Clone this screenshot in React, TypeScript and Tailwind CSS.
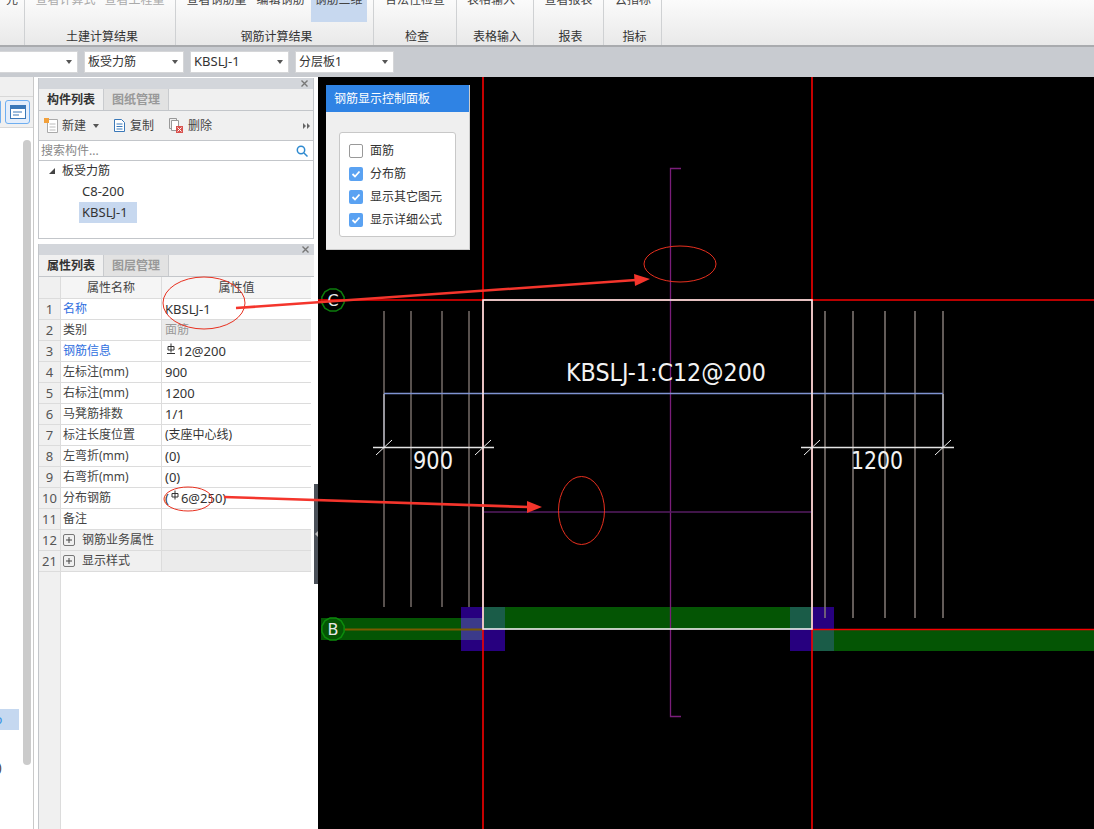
import React from "react";

const FONT = "font-['Noto_Sans','Noto_Sans_CJK_SC',sans-serif]";

function Rebar({ top }: { top?: boolean }) {
  return (
    <svg width="10" height="11" viewBox="0 0 10 11" className="mb-[5px] shrink-0" fill="none" stroke="#333" strokeWidth="1">
      {top ? <path d="M1 10.5h8" /> : null}
      <path d="M2 3.5h6v3.5h-6zM5 0.5v9" />
    </svg>
  );
}

function CloseX() {
  return (
    <svg width="7" height="7" viewBox="0 0 7 7" stroke="#777" strokeWidth="1.4">
      <path d="M0.5 0.5l6 6M6.5 0.5l-6 6" />
    </svg>
  );
}

function Caret() {
  return <span className="block w-0 h-0 border-x-[3px] border-t-[4px] border-x-transparent border-t-[#555]" />;
}

function TitleBar() {
  return (
    <div className="h-[11px] bg-[#d3d6db] flex items-center justify-end pr-[5px]">
      <CloseX />
    </div>
  );
}

function Tabs({ a, b }: { a: string; b: string }) {
  return (
    <div className="h-[22px] bg-[#f0f0f0] border-b border-[#c3c6ca] flex text-[12px] leading-[22px]">
      <div className="w-[65px] text-center font-bold text-[#333] border-r border-[#c9cbce]">{a}</div>
      <div className="w-[65px] text-center font-bold text-[#999] bg-[#e2e2e2] border-r border-[#c9cbce]">{b}</div>
    </div>
  );
}

function RibbonGroup({ w, top, label, gray, shift, children }: { w: string; top?: string[]; label?: string; gray?: boolean; shift?: string; children?: React.ReactNode }) {
  return (
    <div className={`${w} h-[45px] border-r border-[#cfd1d3] flex flex-col items-center shrink-0`}>
      <div className={`h-[22px] overflow-hidden flex items-start justify-center gap-[9px] text-[12px] ${shift ?? ""} ${gray ? "text-[#aaa]" : "text-[#444]"}`}>
        {children ?? top?.map((t) => <span key={t} className="-mt-[9px] leading-[18px]">{t}</span>)}
      </div>
      <div className="mt-[7px] pl-[4px] text-[12px] leading-[16px] text-[#333]">{label}</div>
    </div>
  );
}

function Select({ w, text, latin }: { w: string; text?: string; latin?: boolean }) {
  return (
    <div className={`${w} h-[22px] bg-white border border-[#d5d6d8] flex items-center justify-between pl-[3px] pr-[5px] ${latin ? "text-[13px]" : "text-[12px]"} text-[#333]`}>
      <span>{text}</span>
      <Caret />
    </div>
  );
}

type Row = { n: number; name: string; value?: React.ReactNode; blue?: boolean; muted?: boolean; plus?: boolean };

const Lat = ({ children }: { children: React.ReactNode }) => <span className="text-[13px] leading-[18px] -mt-[1px]">{children}</span>;

const rows: Row[] = [
  { n: 1, name: "名称", value: <Lat>KBSLJ-1</Lat>, blue: true },
  { n: 2, name: "类别", value: "面筋", muted: true },
  {
    n: 3,
    name: "钢筋信息",
    blue: true,
    value: (
      <span className="flex items-center gap-[1px] pl-[1px]">
        <Rebar top />
        <Lat>12@200</Lat>
      </span>
    ),
  },
  { n: 4, name: "左标注(mm)", value: <Lat>900</Lat> },
  { n: 5, name: "右标注(mm)", value: <Lat>1200</Lat> },
  { n: 6, name: "马凳筋排数", value: <Lat>1/1</Lat> },
  { n: 7, name: "标注长度位置", value: "(支座中心线)" },
  { n: 8, name: "左弯折(mm)", value: <Lat>(0)</Lat> },
  { n: 9, name: "右弯折(mm)", value: <Lat>(0)</Lat> },
  {
    n: 10,
    name: "分布钢筋",
    value: (
      <span className="flex items-center gap-[1px]">
        <Lat>(</Lat>
        <Rebar />
        <Lat>6@250)</Lat>
      </span>
    ),
  },
  { n: 11, name: "备注" },
  { n: 12, name: "钢筋业务属性", plus: true },
  { n: 21, name: "显示样式", plus: true },
];

function PropRow({ r }: { r: Row }) {
  const shaded = r.muted || r.plus;
  return (
    <div className="flex h-[21px] border-b border-[#dcdcdc] text-[12px] leading-[20px]">
      <div className="w-[22px] shrink-0 bg-[#f0f0f0] border-r border-[#dcdcdc] text-center text-[13px] text-[#555]">{r.n}</div>
      <div className={`w-[101px] shrink-0 border-r border-[#dcdcdc] pl-[2px] flex items-center gap-[7px] ${r.blue ? "text-[#2f6fe0]" : "text-[#444]"} ${r.plus ? "bg-[#f0f0f0]" : ""}`}>
        {r.plus ? (
          <svg width="12" height="12" viewBox="0 0 12 12" fill="none" stroke="#444">
            <rect x="0.5" y="0.5" width="11" height="11" rx="1.5" stroke="#777" />
            <path d="M3 6h6M6 3v6" />
          </svg>
        ) : null}
        {r.name}
      </div>
      <div className={`flex-1 pl-[3px] flex items-center ${shaded ? "bg-[#ebebeb]" : ""} ${r.muted ? "text-[#999]" : "text-[#333]"}`}>{r.value}</div>
    </div>
  );
}

function Check({ label, on }: { label: string; on: boolean }) {
  return (
    <div className="h-[23px] flex items-center gap-[7px] text-[12px] text-[#333]">
      {on ? (
        <span className="w-[14px] h-[14px] rounded-[2px] bg-[#5aa2f2] flex items-center justify-center">
          <svg width="10" height="10" viewBox="0 0 10 10" fill="none" stroke="#fff" strokeWidth="1.8">
            <path d="M1.5 5l2.5 2.5 4.5-5" />
          </svg>
        </span>
      ) : (
        <span className="w-[14px] h-[14px] rounded-[2px] bg-white border border-[#999]" />
      )}
      {label}
    </div>
  );
}

const bars1 = [384, 411, 442, 469];
const bars2 = [825, 853, 885, 915, 943];
const ring = (cx: number, cy: number) =>
  Array.from({ length: 12 }, (_, i) => {
    const a = (Math.PI / 12) * (2 * i + 1);
    return `${cx + 11.5 * Math.cos(a)},${cy + 11.5 * Math.sin(a)}`;
  }).join(" ");

function Drawing() {
  return (
    <svg width="776" height="752" viewBox="318 77 776 752" className="block" fontFamily="'DejaVu Sans',sans-serif">
      <rect x="321" y="618" width="162" height="22" fill="#045504" />
      <rect x="483" y="607" width="329" height="22" fill="#045504" />
      <rect x="812" y="629" width="282" height="22" fill="#045504" />
      <rect x="461" y="607" width="44" height="44" fill="#27007f" />
      <rect x="790" y="607" width="44" height="44" fill="#27007f" />
      <rect x="461" y="618" width="22" height="22" fill="#3b3a8a" />
      <rect x="483" y="607" width="22" height="22" fill="#1a5c48" />
      <rect x="790" y="607" width="22" height="22" fill="#1a5c48" />
      <rect x="812" y="629" width="22" height="22" fill="#1a5c48" />
      <path d="M321 629.5H483" stroke="#7a5a00" strokeWidth="2" />
      <path d="M483 77V829M812 77V829M318 300H1094M812 629.5H1094" stroke="#f60000" strokeWidth="1.6" />
      {bars1.map((x) => (
        <path key={x} d={`M${x} 311V607`} stroke="#766c68" strokeWidth="1.5" />
      ))}
      {bars2.map((x) => (
        <path key={x} d={`M${x} 311V618`} stroke="#857b77" strokeWidth="1.5" />
      ))}
      <path d="M681 168.5H670.5V716.5H681" fill="none" stroke="#7a1e7a" strokeWidth="1.3" />
      <path d="M483 512H812" stroke="#561c62" strokeWidth="1.5" />
      <path d="M384 447V394M943 447V394" fill="none" stroke="#c0c4d0" strokeWidth="1.2" />
      <path d="M384 393.5H943" stroke="#7f93d2" strokeWidth="1.5" />
      <rect x="483" y="300" width="329" height="329" fill="none" stroke="#f0f0f0" strokeWidth="1.6" />
      <path d="M373 447.5H494M801 447.5H954" stroke="#e4e4e4" strokeWidth="1.5" />
      <path d="M376 455L392 440M475 455L491 440M804 455L820 440M935 455L951 440" stroke="#f0f0f0" strokeWidth="1" />
      <text x="566" y="381" fill="#f2f2f2" fontSize="24" textLength="200" lengthAdjust="spacingAndGlyphs">KBSLJ-1:C12@200</text>
      <text x="413" y="469" fill="#f2f2f2" fontSize="24" textLength="40" lengthAdjust="spacingAndGlyphs">900</text>
      <text x="851" y="469" fill="#f2f2f2" fontSize="24" textLength="52" lengthAdjust="spacingAndGlyphs">1200</text>
      <polygon points={ring(333, 300)} fill="#000" stroke="#0c7c0c" strokeWidth="1.5" />
      <polygon points={ring(333, 629)} fill="#045504" stroke="#0c8c0c" strokeWidth="1.5" />
      <path d="M321 300H344" stroke="#f60000" strokeWidth="1.6" />
      <text x="333" y="306" fill="#e8e8e8" fontSize="16" textAnchor="middle">C</text>
      <text x="333" y="635" fill="#e8e8e8" fontSize="16" textAnchor="middle">B</text>
    </svg>
  );
}

export default function App() {
  return (
    <div className={`relative w-[1094px] h-[829px] overflow-hidden flex flex-col bg-white ${FONT}`}>
      {/* ribbon */}
      <div className="h-[47px] flex bg-gradient-to-b from-[#fbfbfb] to-[#e9e9e9] border-b-2 border-[#a9abae] shrink-0">
        <RibbonGroup w="w-[25px]" top={["元"]} />
        <RibbonGroup w="w-[151px]" top={["查看计算式", "查看工程量"]} label="土建计算结果" gray />
        <RibbonGroup w="w-[198px]" label="钢筋计算结果" shift="pl-[4px] gap-[10px]">
          <span className="-mt-[9px] leading-[18px]">查看钢筋量</span>
          <span className="-mt-[9px] leading-[18px]">编辑钢筋</span>
          <span className="w-[56px] h-[22px] bg-[#c7d8ef] text-center -ml-[4px]">
            <span className="block -mt-[9px] leading-[18px]">钢筋三维</span>
          </span>
        </RibbonGroup>
        <RibbonGroup w="w-[83px]" top={["合法性检查"]} label="检查" />
        <RibbonGroup w="w-[77px]" top={["表格输入"]} label="表格输入" shift="pr-[8px]" />
        <RibbonGroup w="w-[70px]" top={["查看报表"]} label="报表" />
        <RibbonGroup w="w-[58px]" top={["云指标"]} label="指标" shift="pl-[1px]" />
      </div>
      {/* toolbar */}
      <div className="h-[30px] bg-[#c8cbd0] flex items-center gap-[6px] shrink-0 -ml-[1px]">
        <Select w="w-[79px]" />
        <Select w="w-[100px]" text="板受力筋" />
        <Select w="w-[99px]" text="KBSLJ-1" latin />
        <Select w="w-[99px]" text="分层板1" />
      </div>
      {/* main */}
      <div className="flex-1 flex min-h-0 bg-white">
        {/* left strip */}
        <div className="w-[34px] shrink-0 bg-white border-r border-[#c9c9c9] flex flex-col">
          <div className="h-[20px] bg-[#f0f0f0] border-b border-[#d8d8d8]" />
          <div className="h-[31px] bg-[#f0f0f0] border-b border-[#d8d8d8] flex items-center justify-between pr-[3px] overflow-hidden">
            <span className="w-[4px] h-[24px] -ml-[3px] rounded-[3px] border border-[#6eaef0] bg-[#e4eefb]" />
            <span className="w-[25px] h-[24px] rounded-[3px] border border-[#6eaef0] bg-[#e4eefb] flex items-center justify-center">
              <svg width="16" height="14" viewBox="0 0 16 14">
                <rect x="0.5" y="0.5" width="15" height="13" fill="#fff" stroke="#3a78b8" />
                <rect x="1" y="1" width="14" height="3" fill="#3a78b8" />
                <path d="M3 7h9M3 10h6" stroke="#3a78b8" />
              </svg>
            </span>
          </div>
          <div className="flex-1 flex justify-end pr-[2px] pt-[12px]">
            <div className="w-[8px] h-[625px] rounded-[4px] bg-[#cbcbcb]" />
          </div>
          <div className="h-[64px] relative -mt-[120px] mb-[56px] w-[19px] text-[12px]">
            <div className="h-[21px] bg-[#c5d8f0] text-[#2f8fe0] leading-[21px]">
              <span className="-ml-[5px]">o</span>
            </div>
            <div className="mt-[30px] -ml-[2px] leading-[16px] text-[#333]">)</div>
          </div>
        </div>
        {/* panels */}
        <div className="w-[280px] shrink-0 flex flex-col pl-[4px] pr-0">
          <div className="h-[161px] mt-[1px] border border-[#c3c6ca] border-t-0 bg-white flex flex-col shrink-0">
            <TitleBar />
            <Tabs a="构件列表" b="图纸管理" />
            <div className="h-[30px] bg-[#f0f0f0] border-b border-[#c3c6ca] flex items-center pl-[5px] text-[12px] text-[#444]">
              <svg width="15" height="16" viewBox="0 0 15 16" fill="none" className="mr-[3px]">
                <path d="M3.5 1.5h10v13h-10z" fill="#fff" stroke="#aaa" />
                <path d="M5.5 6h6M5.5 9h6M5.5 12h6" stroke="#bbb" />
                <rect x="0" y="0" width="5" height="5" fill="#f2a03a" />
              </svg>
              新建
              <span className="ml-[7px] mr-[14px]"><Caret /></span>
              <svg width="13" height="15" viewBox="0 0 13 15" fill="none" className="mr-[4px]">
                <path d="M1.5 1.5h7l3 3v9h-10z" fill="#fff" stroke="#3a78b8" />
                <path d="M3.5 6h6M3.5 8.5h6M3.5 11h6" stroke="#3a78b8" />
              </svg>
              复制
              <svg width="15" height="15" viewBox="0 0 15 15" fill="none" className="ml-[15px] mr-[4px]">
                <path d="M0.5 0.5h7v2M0.5 0.5v10h2" stroke="#999" />
                <path d="M2.5 2.5h7v10h-7z" fill="#fff" stroke="#999" />
                <rect x="7" y="8" width="7" height="7" fill="#d9534f" />
                <path d="M8.5 9.5l4 4M12.5 9.5l-4 4" stroke="#fff" />
              </svg>
              删除
              <span className="ml-auto mr-[3px] flex gap-[1px]">
                <span className="border-y-[3px] border-l-[3px] border-y-transparent border-l-[#666]" />
                <span className="border-y-[3px] border-l-[3px] border-y-transparent border-l-[#666]" />
              </span>
            </div>
            <div className="h-[20px] border-b border-[#c3c6ca] flex items-center justify-between pl-[2px] pr-[5px] text-[12px] text-[#888]">
              <span>搜索构件...</span>
              <svg width="12" height="12" viewBox="0 0 12 12" fill="none" stroke="#2e8ad0" strokeWidth="1.5">
                <circle cx="5" cy="5" r="3.7" />
                <path d="M8 8l3.5 3.5" />
              </svg>
            </div>
            <div className="flex-1 text-[12px] text-[#333]">
              <div className="h-[20px] flex items-center pl-[10px] gap-[7px]">
                <span className="w-0 h-0 border-b-[6px] border-l-[6px] border-b-[#444] border-l-transparent" />
                板受力筋
              </div>
              <div className="h-[21px] flex items-center pl-[43px] text-[13px]">C8-200</div>
              <div className="ml-[40px] w-[58px] h-[21px] bg-[#c7d8ef] flex items-center pl-[3px] text-[13px]">KBSLJ-1</div>
            </div>
          </div>
          <div className="flex-1 mt-[5px] border-l border-[#c3c6ca] bg-white flex flex-col min-h-0 relative">
            <TitleBar />
            <Tabs a="属性列表" b="图层管理" />
            <div className="flex flex-col flex-1 pr-[3px]">
              <div className="flex h-[22px] border-b border-[#dcdcdc] text-[12px] leading-[21px] text-[#444]">
                <div className="w-[22px] shrink-0 bg-[#f0f0f0] border-r border-[#dcdcdc]" />
                <div className="w-[101px] shrink-0 bg-[#f5f5f5] border-r border-[#dcdcdc] text-center">属性名称</div>
                <div className="flex-1 bg-[#f5f5f5] text-center">属性值</div>
              </div>
              {rows.map((r) => (
                <PropRow key={r.n} r={r} />
              ))}
              <div className="w-[22px] flex-1 bg-[#f0f0f0] border-r border-[#dcdcdc]" />
            </div>
          </div>
        </div>
        {/* splitter */}
        <div className="w-[4px] shrink-0 flex flex-col bg-white">
          <div className="h-[407px]" />
          <div className="h-[100px] bg-[#4a5058] flex items-center justify-center">
            <span className="border-y-[3px] border-r-[3px] border-y-transparent border-r-[#bbb]" />
          </div>
        </div>
        {/* canvas */}
        <div className="flex-1 bg-black relative min-w-0">
          <Drawing />
          <div className="absolute left-[8px] top-[8px] w-[144px] h-[165px] bg-[#efefef] border-b border-r border-[#ccc] flex flex-col">
            <div className="h-[27px] bg-[#2f83e4] text-white text-[12px] leading-[27px] pl-[8px]">钢筋显示控制面板</div>
            <div className="mt-[20px] mx-[13px] h-[105px] rounded-[3px] bg-white border border-[#c8c8c8] pl-[9px] pt-[6px]">
              <Check label="面筋" on={false} />
              <Check label="分布筋" on />
              <Check label="显示其它图元" on />
              <Check label="显示详细公式" on />
            </div>
          </div>
        </div>
      </div>
      {/* hand-drawn annotations on top of everything */}
      <svg width="1094" height="829" viewBox="0 0 1094 829" className="absolute left-0 top-0 pointer-events-none" fill="none">
        <ellipse cx="680" cy="264" rx="36" ry="18" stroke="#e8301f" />
        <ellipse cx="581.5" cy="510.5" rx="23" ry="34" stroke="#e8301f" />
        <ellipse cx="204" cy="303" rx="41" ry="26" stroke="#e8301f" />
        <ellipse cx="188" cy="499" rx="24" ry="12" stroke="#e8301f" />
        <path d="M236 308L636 280" stroke="#f4352c" strokeWidth="2.6" />
        <path d="M650 279L634 274L635 286Z" fill="#f4352c" />
        <path d="M224 497L528 507" stroke="#f4352c" strokeWidth="2.6" />
        <path d="M542 507L527 501L527 513Z" fill="#f4352c" />
      </svg>
    </div>
  );
}
